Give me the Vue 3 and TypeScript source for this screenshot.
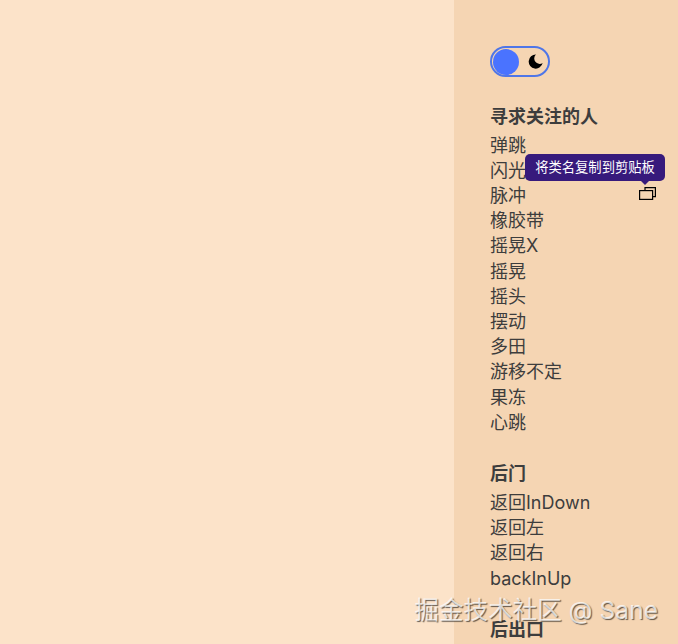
<script setup lang="ts">
interface Group {
  title: string
  items: string[]
}

const groups: Group[] = [
  {
    title: '寻求关注的人',
    items: ['弹跳', '闪光', '脉冲', '橡胶带', '摇晃X', '摇晃', '摇头', '摆动', '多田', '游移不定', '果冻', '心跳'],
  },
  {
    title: '后门',
    items: ['返回InDown', '返回左', '返回右', 'backInUp'],
  },
  {
    title: '后出口',
    items: ['返回OutDown'],
  },
]
</script>

<template>
  <div class="page">
    <main class="stage"></main>
    <aside class="sidebar">
      <div class="toggle">
        <span class="knob"></span>
        <svg class="moon" viewBox="0 0 16 16" width="15" height="15">
          <path d="M8.5 .6A7.5 7.5 0 1 0 15.6 9.6 5.75 5.75 0 0 1 8.5 .6Z" fill="#000" />
        </svg>
      </div>

      <section v-for="g in groups" :key="g.title" class="group">
        <h3 class="group-title">{{ g.title }}</h3>
        <ul class="group-list">
          <li v-for="item in g.items" :key="item" class="group-item">
            {{ item }}
            <template v-if="item === '脉冲'">
              <span class="copy">
                <svg viewBox="0 0 17 13" width="17" height="13" fill="none" stroke="#000" stroke-width="1.2">
                  <rect x="0.6" y="3.6" width="13" height="8.8" />
                  <path d="M6 3.4V0.6H16.4V9.6H13.8" />
                </svg>
                <span class="tip">将类名复制到剪贴板</span>
              </span>
            </template>
          </li>
        </ul>
      </section>
    </aside>
    <div class="watermark">掘金技术社区 @ Sane</div>
  </div>
</template>

<style>
html,
body {
  margin: 0;
  overflow: hidden;
}
</style>

<style scoped>
.page {
  position: relative;
  display: flex;
  width: 678px;
  height: 644px;
  overflow: hidden;
  background: #fce3c9;
  font-family: "Inter", "Noto Sans CJK SC", sans-serif;
  color: #3d3d3d;
}

.stage {
  flex: 1;
}

.sidebar {
  width: 188px;
  padding: 46px 0 0 36px;
  background: #f5d5b3;
}

.toggle {
  display: flex;
  align-items: center;
  justify-content: space-between;
  box-sizing: border-box;
  width: 60px;
  height: 31px;
  padding: 0 5px 0 1px;
  border: 2px solid #4f76e8;
  border-radius: 16px;
}

.knob {
  width: 26px;
  height: 26px;
  border-radius: 50%;
  background: #4a73ff;
}

.group {
  margin-top: 26px;
}

.group + .group {
  margin-top: 25.4px;
}

.group-title {
  margin: 0 0 2.6px;
  font-size: 18px;
  line-height: 27px;
  font-weight: 700;
}

.group-list {
  margin: 0;
  padding: 0;
  list-style: none;
}

.group-item {
  position: relative;
  font-size: 18px;
  line-height: 25.2px;
  white-space: nowrap;
}

.copy {
  position: absolute;
  left: 149px;
  top: 4px;
  display: block;
  width: 17px;
  height: 13px;
  line-height: 0;
}

.tip {
  position: absolute;
  right: -9px;
  bottom: 19px;
  box-sizing: border-box;
  width: 140px;
  height: 27px;
  border-radius: 5px;
  background: #371a7c;
  color: #fff;
  font-size: 13.3px;
  line-height: 27px;
  text-align: center;
}

.tip::after {
  content: "";
  position: absolute;
  left: 116px;
  top: 27px;
  border: 4px solid transparent;
  border-top-color: #371a7c;
  border-bottom: 0;
}

.watermark {
  position: absolute;
  right: 20px;
  bottom: 18px;
  font-size: 24.6px;
  line-height: 32px;
  color: rgba(255, 255, 255, 0.75);
  text-shadow: 1px 1px 1px rgba(0, 0, 0, 0.6);
  white-space: nowrap;
}
</style>
